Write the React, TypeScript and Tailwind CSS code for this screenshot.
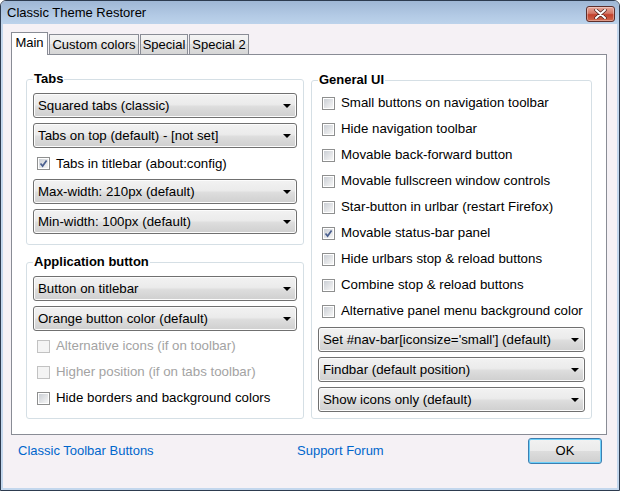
import type { ReactNode } from 'react';
import { clsx } from 'clsx';

const FONT = { fontFamily: '"Liberation Sans", Arial, sans-serif' };

function Caret() {
  return (
    <svg width="8" height="4" viewBox="0 0 8 4" className="shrink-0">
      <polygon points="0,0 8,0 4,4" fill="#000" />
    </svg>
  );
}

function Select({ label }: { label: string }) {
  return (
    <div className="flex h-[25px] items-center justify-between rounded-[3px] border border-[#707070] bg-[linear-gradient(#f2f2f2,#ebebeb_45%,#dddddd_55%,#cfcfcf)] pl-[4px] pr-[5px] text-[13.3px] shadow-[inset_0_0_0_1px_#fcfcfc]">
      <span className="leading-none">{label}</span>
      <Caret />
    </div>
  );
}

function CheckBox({ checked, disabled }: { checked?: boolean; disabled?: boolean }) {
  return (
    <span
      className={clsx(
        'relative flex h-[13px] w-[13px] shrink-0 items-center justify-center border p-[1px]',
        disabled ? 'border-[#c2c2c2] bg-[#f4f4f4]' : 'border-[#8e8f8f] bg-white'
      )}
    >
      <span
        className={clsx(
          'block h-full w-full',
          disabled
            ? 'bg-[#f4f4f4]'
            : 'bg-[linear-gradient(135deg,#cbcfd5,#f6f6f6)]'
        )}
      />
      {checked && (
        <svg width="11" height="11" viewBox="0 0 11 11" className="absolute left-[0px] top-[0px]">
          <path d="M2.5 5.5 L4.6 8 L8.6 2.5" fill="none" stroke="#4a5f8f" strokeWidth="1.7" />
        </svg>
      )}
    </span>
  );
}

function Check({ label, checked, disabled, className }: { label: string; checked?: boolean; disabled?: boolean; className?: string }) {
  return (
    <div className={clsx('flex items-center gap-[6px] pl-[4px] text-[13.3px]', className, disabled && 'text-[#a3a3a3]')}>
      <CheckBox checked={checked} disabled={disabled} />
      <span className="leading-none">{label}</span>
    </div>
  );
}

function Group({ title, children, className }: { title: string; children: ReactNode; className?: string }) {
  return (
    <fieldset className={clsx('rounded-[3px] border border-[#d5dfe5] px-[6px]', className)}>
      <legend className="px-[1px] text-[13px] font-bold leading-[16px]">{title}</legend>
      {children}
    </fieldset>
  );
}

function Tab({ label, active, width }: { label: string; active?: boolean; width: string }) {
  return (
    <div
      className={clsx(
        'flex items-center justify-center border border-[#898c95]',
        width,
        active
          ? 'relative z-10 -mb-px h-[23px] border-b-0 bg-white pb-[2px]'
          : 'ml-[1px] h-[20px] border-b-0 bg-[linear-gradient(#f4f4f4,#ececec_50%,#e0e0e0_50%,#d6d6d6)]'
      )}
    >
      {label}
    </div>
  );
}

function CloseButton() {
  return (
    <div className="flex h-[16px] w-[29px] items-center justify-center rounded-[3px] border border-[#5d2f2c] bg-[linear-gradient(#e7a89b,#d47766_45%,#c2412d_55%,#d06a4f)] shadow-[inset_0_0_0_1px_rgba(255,255,255,0.35)]">
      <svg width="13" height="10" viewBox="0 0 13 10">
        <path d="M2 1 L11 9 M11 1 L2 9" stroke="#4a2320" strokeWidth="3.4" strokeLinecap="round" />
        <path d="M2 1 L11 9 M11 1 L2 9" stroke="#fff" strokeWidth="2" strokeLinecap="round" />
      </svg>
    </div>
  );
}

export default function App() {
  return (
    <div
      style={FONT}
      className="flex h-[491px] w-[620px] flex-col overflow-hidden rounded-t-[6px] border border-[#2d3b4f] bg-[#f5f1f5] text-[13px] text-black"
    >
      {/* title bar */}
      <div className="flex h-[23px] shrink-0 items-center justify-between bg-[linear-gradient(#9fb7d5,#b2c9e4_60%,#bcd3eb)] pl-[6px] pr-[4px]">
        <span className="text-[13px]">Classic Theme Restorer</span>
        <div className="pt-[3px]">
          <CloseButton />
        </div>
      </div>

      <div className="flex flex-1 flex-col border-x-2 border-b-2 border-[#c3d7ed] pl-[8px] pt-[8px]">
        {/* tab strip */}
        <div className="flex h-[22px] items-end">
          <Tab label="Main" active width="w-[37px]" />
          <Tab label="Custom colors" width="w-[90px]" />
          <Tab label="Special" width="w-[48px]" />
          <Tab label="Special 2" width="w-[60px]" />
        </div>

        {/* panel */}
        <div className="flex h-[381px] w-[596px] items-start gap-[7px] border border-[#898c95] bg-white pl-[14px] pt-[16px]">
          <div className="flex w-[278px] flex-col">
            <Group title="Tabs" className="pb-[10px]">
              <div className="flex flex-col gap-[5px] pt-[6px]">
                <Select label="Squared tabs (classic)" />
                <Select label="Tabs on top (default) - [not set]" />
                <Check label="Tabs in titlebar (about:config)" checked className="h-[21px]" />
                <Select label="Max-width: 210px (default)" />
                <Select label="Min-width: 100px (default)" />
              </div>
            </Group>
            <Group title="Application button" className="mt-[9px] pb-[7px]">
              <div className="flex flex-col gap-[5px] pt-[6px]">
                <Select label="Button on titlebar" />
                <Select label="Orange button color (default)" />
              </div>
              <div className="mt-[2px] flex flex-col">
                <Check label="Alternative icons (if on toolbar)" disabled className="h-[26px]" />
                <Check label="Higher position (if on tabs toolbar)" disabled className="h-[26px]" />
                <Check label="Hide borders and background colors" className="h-[26px]" />
              </div>
            </Group>
          </div>

          <Group title="General UI" className="mt-[1px] w-[281px] pb-[6px]">
            <div className="flex flex-col pt-[2px]">
              {[
                'Small buttons on navigation toolbar',
                'Hide navigation toolbar',
                'Movable back-forward button',
                'Movable fullscreen window controls',
                'Star-button in urlbar (restart Firefox)',
                'Movable status-bar panel',
                'Hide urlbars stop & reload buttons',
                'Combine stop & reload buttons',
                'Alternative panel menu background color',
              ].map((t) => (
                <Check key={t} label={t} checked={t === 'Movable status-bar panel'} className="h-[26px]" />
              ))}
            </div>
            <div className="mt-[3px] flex flex-col gap-[5px]">
              <Select label="Set #nav-bar[iconsize='small'] (default)" />
              <Select label="Findbar (default position)" />
              <Select label="Show icons only (default)" />
            </div>
          </Group>
        </div>

        {/* footer */}
        <div className="mt-[3px] grid h-[26px] w-[596px] grid-cols-[279px_1fr_auto] items-center pl-[7px] pr-[5px] text-[#0066cc]">
          <span>Classic Toolbar Buttons</span>
          <span>Support Forum</span>
          <button className="flex h-[26px] w-[74px] items-center justify-center rounded-[3px] border border-[#3c7fb1] bg-[linear-gradient(#f2f2f2,#ebebeb_50%,#dddddd_50%,#cfcfcf)] text-black shadow-[inset_0_0_0_1px_#6dd0fa]">
            OK
          </button>
        </div>
      </div>
    </div>
  );
}
